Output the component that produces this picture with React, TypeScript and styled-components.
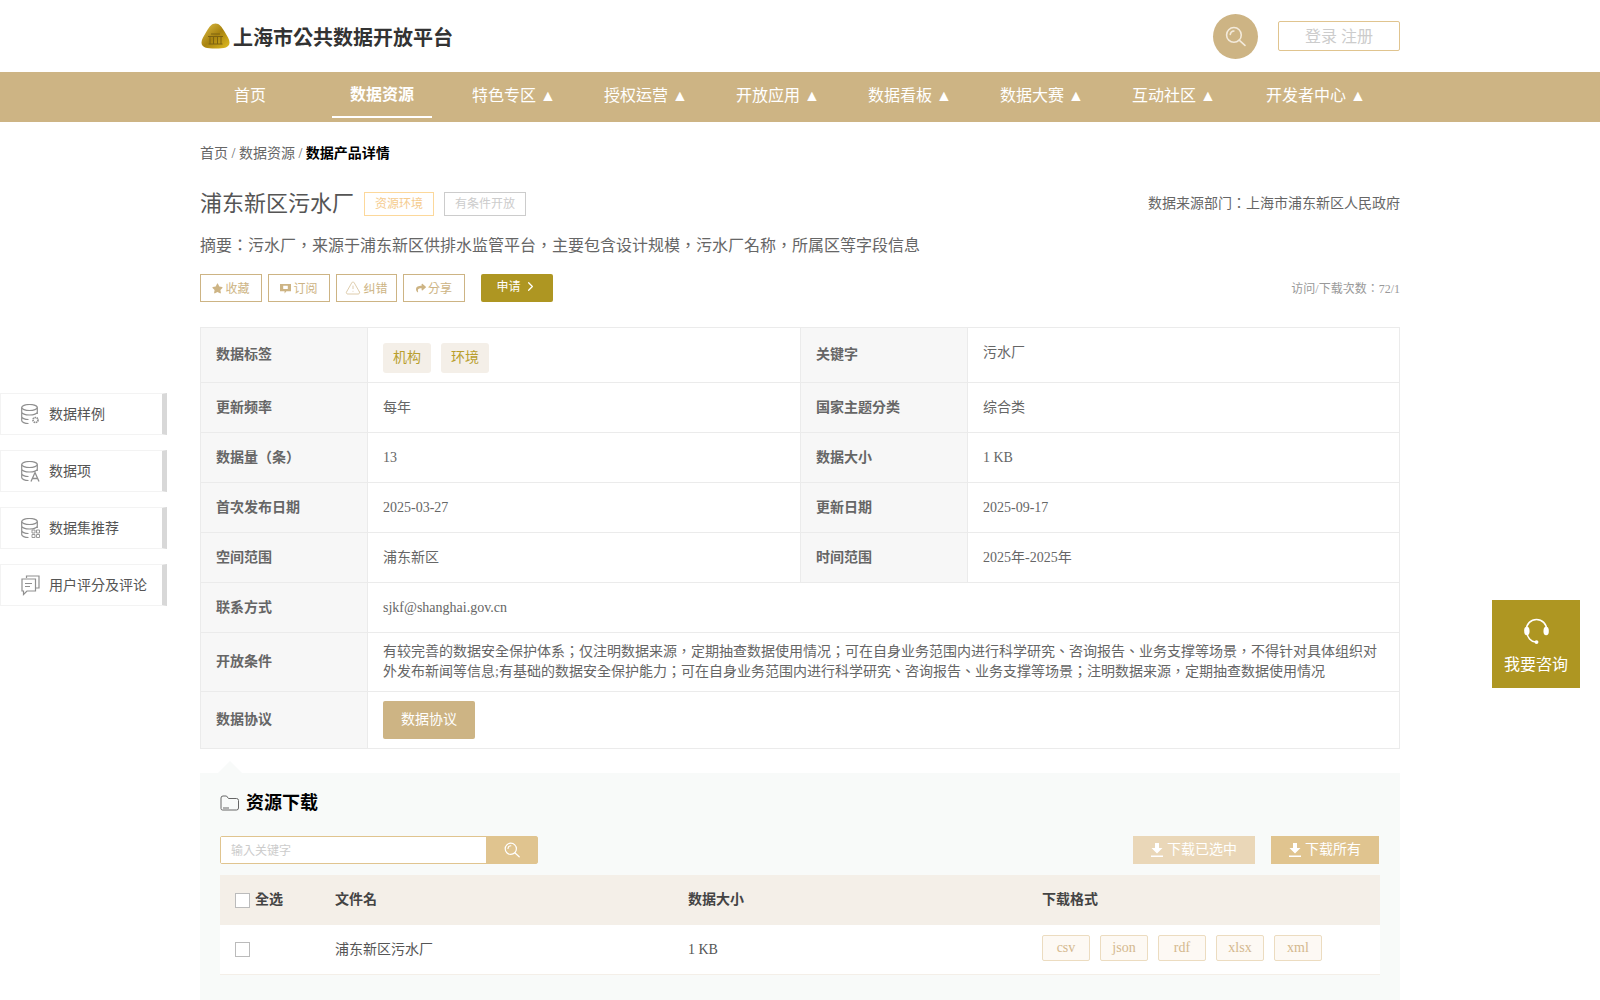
import { ChevronRight, TriangleAlert } from 'lucide-react'
import { FaShare, FaStar } from 'react-icons/fa'
import styled, { createGlobalStyle } from 'styled-components'

const GlobalStyle = createGlobalStyle`
  * {
    box-sizing: border-box;
  }
  body {
    margin: 0;
    background: #fff;
    color: #666;
    font-family: "Liberation Serif", "Noto Sans CJK TC", serif;
    font-size: 14px;
    line-height: 20px;
  }
  button {
    border-radius: 0;
  }
`

const Wrap = styled.div`
  width: 1200px;
  margin: 0 auto;
`

const Header = styled(Wrap)`
  height: 72px;
  display: flex;
  align-items: center;
  justify-content: space-between;
`

const Brand = styled.div`
  display: flex;
  align-items: center;
  gap: 3px;
  padding-left: 1px;
  font-size: 20px;
  font-weight: 700;
  color: #333;
`

const BrandName = styled.span`
  padding-top: 3px;
`

const HeaderRight = styled.div`
  display: flex;
  align-items: center;
  gap: 20px;
`

const SearchCircle = styled.button`
  width: 45px;
  height: 45px;
  padding: 0;
  border: none;
  border-radius: 50%;
  background: #cdb484;
  display: flex;
  align-items: center;
  justify-content: center;
`

const LoginBox = styled.div`
  width: 122px;
  height: 30px;
  border: 1px solid #e0c48f;
  border-radius: 2px;
  color: #ccc;
  font-size: 16px;
  line-height: 29px;
  text-align: center;
`

const NavBar = styled.nav`
  height: 50px;
  background: #cdb484;
`

const NavList = styled(Wrap)`
  display: flex;
  gap: 32px;
`

const NavItem = styled.a<{ $active?: boolean; $wide?: boolean }>`
  width: ${(p) => (p.$wide ? '120px' : '100px')};
  height: 46px;
  color: #fff;
  font-size: 16px;
  font-weight: ${(p) => (p.$active ? 700 : 400)};
  line-height: ${(p) => (p.$active ? '46px' : '48px')};
  text-align: center;
  white-space: nowrap;
  border-bottom: ${(p) => (p.$active ? '2px solid #fff' : 'none')};
`

const Breadcrumb = styled.div`
  padding-top: 22px;
  height: 62px;
  color: #666;
  strong {
    color: #000;
  }
`

const TitleRow = styled.div`
  height: 24px;
  margin-top: 8px;
  display: flex;
  align-items: center;
`

const Title = styled.h1`
  margin: 0 10px 0 0;
  font-size: 22px;
  line-height: 24px;
  font-weight: 400;
  color: #555;
`

const StatusTag = styled.span<{ $muted?: boolean }>`
  height: 24px;
  margin-right: 10px;
  padding: 0 10px;
  border: 1px solid ${(p) => (p.$muted ? '#ccc' : '#fcd89b')};
  color: ${(p) => (p.$muted ? '#ccc' : '#f5cb8d')};
  font-size: 12px;
  line-height: 22px;
`

const Source = styled.div`
  margin-left: auto;
  color: #666;
`

const Summary = styled.p`
  margin: 18px 0 0;
  font-size: 16px;
  line-height: 24px;
  color: #666;
`

const ActionRow = styled.div`
  height: 28px;
  margin-top: 16px;
  display: flex;
  align-items: center;
  gap: 6px;
`

const ActionButton = styled.button<{ $width?: number }>`
  height: 28px;
  width: ${(p) => p.$width ?? 62}px;
  padding: 2px 0 0;
  border: 1px solid #cdb484;
  background: #fff;
  color: #cdb484;
  font: inherit;
  font-size: 12px;
  display: flex;
  align-items: center;
  justify-content: center;
  gap: 2px;
  svg {
    margin-top: -2px;
  }
`

const ApplyButton = styled.button`
  width: 72px;
  height: 28px;
  margin-left: 10px;
  padding: 0 0 3px;
  border: none;
  border-radius: 2px;
  background: #ae9622;
  color: #fff;
  font: inherit;
  font-size: 12px;
  display: flex;
  align-items: center;
  justify-content: center;
  gap: 2px;
`

const Visits = styled.div`
  margin-left: auto;
  padding-top: 2px;
  color: #999;
  font-size: 12px;
`

const InfoTable = styled.table`
  width: 1199px;
  margin-top: 25px;
  border-collapse: collapse;
  table-layout: fixed;
`

const Row = styled.tr<{ $height: number }>`
  height: ${(p) => p.$height}px;
`

const LabelCell = styled.th<{ $raised?: boolean }>`
  padding: 0 15px ${(p) => (p.$raised ? '1px' : '0')};
  border: 1px solid #ebebeb;
  background: #f7f7f7;
  color: #666;
  font-weight: 700;
  text-align: left;
`

const ValueCell = styled.td<{ $raised?: boolean }>`
  padding: 0 15px ${(p) => (p.$raised ? '4px' : '0')};
  border: 1px solid #ebebeb;
  color: #666;
`

const TagList = styled.div`
  display: flex;
  gap: 10px;
  padding-top: 6px;
`

const DataTag = styled.span`
  width: 48px;
  height: 30px;
  border-radius: 3px;
  background: #f4efe8;
  color: #b99f2e;
  line-height: 30px;
  text-align: center;
`

const AgreementButton = styled.button`
  width: 92px;
  height: 38px;
  padding: 0;
  border: none;
  border-radius: 2px;
  background: #cdb484;
  color: #fff;
  font: inherit;
  display: block;
`

const DownloadPanel = styled.section`
  position: relative;
  margin-top: 24px;
  padding: 0 20px 40px;
  background: #f8faf9;
  &::before {
    content: '';
    position: absolute;
    left: 18px;
    top: -12px;
    border-left: 12px solid transparent;
    border-right: 12px solid transparent;
    border-bottom: 12px solid #f8faf9;
  }
`

const PanelTitle = styled.h2`
  height: 60px;
  margin: 0;
  display: flex;
  align-items: center;
  gap: 7px;
  font-size: 18px;
  font-weight: 700;
  color: #000;
`

const Toolbar = styled.div`
  display: flex;
  align-items: center;
  height: 28px;
  margin-top: 3px;
  margin-bottom: 11px;
  padding-right: 1px;
`

const SearchBox = styled.div`
  width: 318px;
  height: 28px;
  display: flex;
  border: 1px solid #e0c48f;
  border-radius: 2px;
  background: #fff;
`

const SearchInput = styled.input`
  flex: 1;
  min-width: 0;
  padding: 2px 10px 0;
  border: none;
  outline: none;
  font: inherit;
  font-size: 12px;
  &::placeholder {
    color: #ccc;
  }
`

const SearchSubmit = styled.button`
  width: 51px;
  padding: 0;
  border: none;
  background: #e0c48f;
  display: flex;
  align-items: center;
  justify-content: center;
`

const DownloadButton = styled.button<{ $width: number; $light?: boolean }>`
  width: ${(p) => p.$width}px;
  height: 28px;
  margin-left: ${(p) => (p.$light ? 'auto' : '16px')};
  padding: 0;
  border: none;
  background: ${(p) => (p.$light ? '#ead7b8' : '#e0c48f')};
  color: #fff;
  font: inherit;
  display: flex;
  align-items: center;
  justify-content: center;
  gap: 4px;
`

const FileGrid = styled.div<{ $head?: boolean }>`
  height: 50px;
  display: grid;
  grid-template-columns: 100px 353px 354px 1fr;
  align-items: center;
  padding-left: 15px;
  background: ${(p) => (p.$head ? '#f4efe8' : '#fff')};
  border-bottom: ${(p) => (p.$head ? 'none' : '1px solid #f4efe8')};
  color: ${(p) => (p.$head ? '#444' : '#555')};
  font-weight: ${(p) => (p.$head ? 700 : 400)};
`

const SelectCell = styled.label`
  display: flex;
  align-items: center;
  gap: 5px;
`

const Check = styled.input.attrs({ type: 'checkbox' })`
  appearance: none;
  width: 15px;
  height: 15px;
  margin: 0;
  border: 1px solid #bbb;
  background: #fff;
`

const Formats = styled.div`
  display: flex;
  gap: 10px;
  margin-bottom: 3px;
`

const FormatTag = styled.span`
  width: 48px;
  height: 26px;
  border: 1px solid #ecdcc0;
  border-radius: 2px;
  background: #fdf9f4;
  color: #d4b88e;
  line-height: 24px;
  text-align: center;
`

const SideMenu = styled.aside`
  position: absolute;
  left: 0;
  top: 393px;
  width: 167px;
  display: flex;
  flex-direction: column;
  gap: 15px;
`

const SideItem = styled.a`
  height: 42px;
  padding-left: 20px;
  display: flex;
  align-items: center;
  gap: 9px;
  border: 1px solid #f3f3f3;
  border-right: 5px solid #d8d8d8;
  background: #fff;
  color: #555;
`

const SideLabel = styled.span`
  padding-top: 2px;
`

const Consult = styled.div`
  position: absolute;
  left: 1492px;
  top: 600px;
  width: 88px;
  height: 88px;
  padding-top: 18px;
  display: flex;
  flex-direction: column;
  align-items: center;
  gap: 10px;
  background: #ae9622;
  color: #fff;
  font-size: 16px;
`

const Logo = () => (
  <svg width="29" height="26" viewBox="0 0 29 26">
    <defs>
      <linearGradient id="gold" x1="0" y1="0" x2="1" y2="1">
        <stop offset="0" stopColor="#e2c24a" />
        <stop offset="0.5" stopColor="#a8830f" />
        <stop offset="1" stopColor="#e0bd22" />
      </linearGradient>
    </defs>
    <path d="M14.500 0.500c4 0 6 3 9 8 3 5 5 8 5 11 0 5-5 6-14 6s-14-1-14-6c0-3 2-6 5-11 3-5 5-8 9-8z" fill="url(#gold)" />
    <path d="M7 13.500h15M7.500 21h14M9 13.500V21M12.500 13.500V21M16.500 13.500V21M20 13.500V21M10 11h9" stroke="#7d6210" strokeWidth="1" fill="none" />
  </svg>
)

const Magnifier = ({ size, color }: { size: number; color: string }) => (
  <svg width={size} height={size} viewBox="0 0 20 20" fill="none" stroke={color} strokeWidth="1.500">
    <circle cx="8.500" cy="8.500" r="7" />
    <path d="M5 8a3.700 3.700 0 0 1 3.500-3.300M13.500 13.500 19 18.500" strokeLinecap="round" />
  </svg>
)

const CommentIcon = () => (
  <svg width="11" height="11" viewBox="0 0 12 12" fill="#cdb484">
    <path d="M0 1h12v8H7l-2 2.500V9H0zM3.500 3v3.500h5V3z" fillRule="evenodd" />
  </svg>
)

const DownloadIcon = () => (
  <svg width="12" height="14" viewBox="0 0 12 14" fill="#fff">
    <path d="M4 0h4v5h3.500L6 10.500.5 5H4zM0 12.500h12V14H0z" />
  </svg>
)

const FolderIcon = () => (
  <svg width="19" height="16" viewBox="0 0 19 16" fill="none" stroke="#666" strokeWidth="1">
    <path d="M1 3a2 2 0 0 1 2-2h3.500l2 2.500H16.500a2 2 0 0 1 2 2V13a2 2 0 0 1-2 2h-14A1.500 1.500 0 0 1 1 13.500z" />
    <path d="M3 13h6" />
  </svg>
)

const Db = ({ children }: { children: React.ReactNode }) => (
  <svg width="19" height="21" viewBox="0 0 19 21" fill="none" stroke="#8f8f8f" strokeWidth="1.200">
    <ellipse cx="8.500" cy="3.500" rx="7.800" ry="3" />
    <path d="M.7 3.500v13c0 1.600 3 3 6.800 3M16.300 3.500V10M.7 8c0 1.600 3.400 3 7.800 3s7.800-1.400 7.800-3M.7 12.500c0 1.600 3 3 6.800 3" />
    {children}
  </svg>
)

const GearDb = () => (
  <Db>
    <circle cx="14.500" cy="16" r="2.500" strokeWidth="1.700" strokeDasharray="1.500 .6" />
  </Db>
)

const LetterDb = () => (
  <Db>
    <path d="M10 20.500 14 11.500l4 9M11.500 17.500h5" strokeWidth="1.300" />
  </Db>
)

const GridDb = () => (
  <Db>
    <path d="M11 12h3v3h-3zM15.500 12h3v3h-3zM11 16.500h3v3h-3zM15.500 16.500h3v3h-3z" strokeWidth=".9" />
  </Db>
)

const ChatIcon = () => (
  <svg width="19" height="21" viewBox="0 0 19 21" fill="none" stroke="#8f8f8f" strokeWidth="1.200">
    <path d="M5.500 3V1H18v12h-3.500" />
    <path d="M1 4h13.500v12H6l-3.500 3.500V16H1zM4 8.500h7M4 11.500h5" />
  </svg>
)

const Headset = () => (
  <svg width="27" height="27" viewBox="0 0 28 28" fill="none">
    <path d="M3.500 14V12a10.500 10.500 0 0 1 21 0v2M4 15c.5 5 4 9.500 9 9.800" stroke="#fff" strokeWidth="1.600" />
    <ellipse cx="4" cy="13.500" rx="2.800" ry="4.500" fill="#fff" />
    <ellipse cx="24" cy="13.500" rx="2.800" ry="4.500" fill="#fff" />
    <circle cx="14" cy="25" r="2" fill="#fff" />
  </svg>
)

const navItems = ['特色专区 ▲', '授权运营 ▲', '开放应用 ▲', '数据看板 ▲', '数据大赛 ▲', '互动社区 ▲']

const sideItems = [
  { icon: <GearDb />, label: '数据样例' },
  { icon: <LetterDb />, label: '数据项' },
  { icon: <GridDb />, label: '数据集推荐' },
  { icon: <ChatIcon />, label: '用户评分及评论' },
]

const pairRows = [
  ['更新频率', '每年', '国家主题分类', '综合类'],
  ['数据量（条）', '13', '数据大小', '1 KB'],
  ['首次发布日期', '2025-03-27', '更新日期', '2025-09-17'],
  ['空间范围', '浦东新区', '时间范围', '2025年-2025年'],
]

const formats = ['csv', 'json', 'rdf', 'xlsx', 'xml']

const App = () => {
  return (
    <>
      <GlobalStyle />
      <Header>
        <Brand>
          <Logo />
          <BrandName>上海市公共数据开放平台</BrandName>
        </Brand>
        <HeaderRight>
          <SearchCircle>
            <Magnifier size={21} color="#f3eadb" />
          </SearchCircle>
          <LoginBox>登录 注册</LoginBox>
        </HeaderRight>
      </Header>
      <NavBar>
        <NavList>
          <NavItem>首页</NavItem>
          <NavItem $active>数据资源</NavItem>
          {navItems.map((item) => (
            <NavItem key={item}>{item}</NavItem>
          ))}
          <NavItem $wide>开发者中心 ▲</NavItem>
        </NavList>
      </NavBar>
      <Wrap>
        <Breadcrumb>
          首页 / 数据资源 / <strong>数据产品详情</strong>
        </Breadcrumb>
        <TitleRow>
          <Title>浦东新区污水厂</Title>
          <StatusTag>资源环境</StatusTag>
          <StatusTag $muted>有条件开放</StatusTag>
          <Source>数据来源部门：上海市浦东新区人民政府</Source>
        </TitleRow>
        <Summary>摘要：污水厂，来源于浦东新区供排水监管平台，主要包含设计规模，污水厂名称，所属区等字段信息</Summary>
        <ActionRow>
          <ActionButton>
            <FaStar size={11} />
            收藏
          </ActionButton>
          <ActionButton>
            <CommentIcon />
            订阅
          </ActionButton>
          <ActionButton $width={61}>
            <TriangleAlert size={16} strokeWidth={1} />
            纠错
          </ActionButton>
          <ActionButton>
            <FaShare size={10} />
            分享
          </ActionButton>
          <ApplyButton>
            申请
            <ChevronRight size={15} />
          </ApplyButton>
          <Visits>访问/下载次数：72/1</Visits>
        </ActionRow>
        <InfoTable>
          <colgroup>
            <col width="167" />
            <col width="433" />
            <col width="167" />
            <col width="432" />
          </colgroup>
          <tbody>
            <Row $height={55}>
              <LabelCell $raised>数据标签</LabelCell>
              <ValueCell>
                <TagList>
                  <DataTag>机构</DataTag>
                  <DataTag>环境</DataTag>
                </TagList>
              </ValueCell>
              <LabelCell>关键字</LabelCell>
              <ValueCell $raised>污水厂</ValueCell>
            </Row>
            {pairRows.map((row) => (
              <Row $height={50} key={row[0]}>
                <LabelCell>{row[0]}</LabelCell>
                <ValueCell>{row[1]}</ValueCell>
                <LabelCell>{row[2]}</LabelCell>
                <ValueCell>{row[3]}</ValueCell>
              </Row>
            ))}
            <Row $height={50}>
              <LabelCell>联系方式</LabelCell>
              <ValueCell colSpan={3}>sjkf@shanghai.gov.cn</ValueCell>
            </Row>
            <Row $height={59}>
              <LabelCell>开放条件</LabelCell>
              <ValueCell colSpan={3}>
                有较完善的数据安全保护体系；仅注明数据来源，定期抽查数据使用情况；可在自身业务范围内进行科学研究、咨询报告、业务支撑等场景，不得针对具体组织对外发布新闻等信息;有基础的数据安全保护能力；可在自身业务范围内进行科学研究、咨询报告、业务支撑等场景；注明数据来源，定期抽查数据使用情况
              </ValueCell>
            </Row>
            <Row $height={57}>
              <LabelCell>数据协议</LabelCell>
              <ValueCell colSpan={3}>
                <AgreementButton>数据协议</AgreementButton>
              </ValueCell>
            </Row>
          </tbody>
        </InfoTable>
        <DownloadPanel>
          <PanelTitle>
            <FolderIcon />
            资源下载
          </PanelTitle>
          <Toolbar>
            <SearchBox>
              <SearchInput placeholder="输入关键字" />
              <SearchSubmit>
                <Magnifier size={16} color="#fff" />
              </SearchSubmit>
            </SearchBox>
            <DownloadButton $width={122} $light>
              <DownloadIcon />
              下载已选中
            </DownloadButton>
            <DownloadButton $width={108}>
              <DownloadIcon />
              下载所有
            </DownloadButton>
          </Toolbar>
          <FileGrid $head>
            <SelectCell>
              <Check />
              全选
            </SelectCell>
            <span>文件名</span>
            <span>数据大小</span>
            <span>下载格式</span>
          </FileGrid>
          <FileGrid>
            <SelectCell>
              <Check />
            </SelectCell>
            <span>浦东新区污水厂</span>
            <span>1 KB</span>
            <Formats>
              {formats.map((f) => (
                <FormatTag key={f}>{f}</FormatTag>
              ))}
            </Formats>
          </FileGrid>
        </DownloadPanel>
      </Wrap>
      <SideMenu>
        {sideItems.map((item) => (
          <SideItem key={item.label}>
            {item.icon}
            <SideLabel>{item.label}</SideLabel>
          </SideItem>
        ))}
      </SideMenu>
      <Consult>
        <Headset />
        我要咨询
      </Consult>
    </>
  )
}

export default App
